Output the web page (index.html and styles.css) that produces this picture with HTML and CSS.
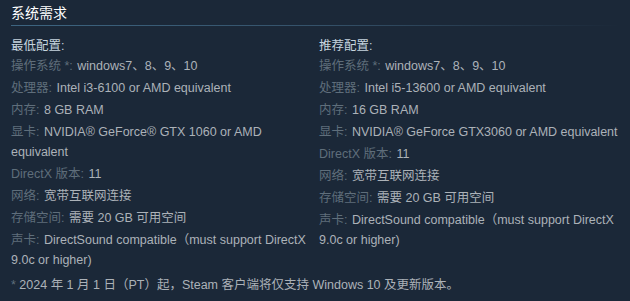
FILE: index.html
```html
<!DOCTYPE html>
<html lang="zh-CN">
<head>
<meta charset="utf-8">
<link rel="stylesheet" href="styles.css">
</head>
<body>
<div class="sysreq">
  <h2 class="title">系统需求</h2>
  <div class="cols">
    <div class="col">
      <div class="coltitle">最低配置:</div>
      <ul class="list">
        <li><span class="lbl">操作系统 *:</span> windows7、8、9、10</li>
        <li><span class="lbl">处理器:</span> Intel i3-6100 or AMD equivalent</li>
        <li><span class="lbl">内存:</span> 8 GB RAM</li>
        <li><span class="lbl">显卡:</span> NVIDIA® GeForce® GTX 1060 or AMD equivalent</li>
        <li><span class="lbl">DirectX 版本:</span> 11</li>
        <li><span class="lbl">网络:</span> 宽带互联网连接</li>
        <li><span class="lbl">存储空间:</span> 需要 20 GB 可用空间</li>
        <li><span class="lbl">声卡:</span> DirectSound compatible（must support DirectX 9.0c or higher)</li>
      </ul>
    </div>
    <div class="col">
      <div class="coltitle">推荐配置:</div>
      <ul class="list">
        <li><span class="lbl">操作系统 *:</span> windows7、8、9、10</li>
        <li><span class="lbl">处理器:</span> Intel i5-13600 or AMD equivalent</li>
        <li><span class="lbl">内存:</span> 16 GB RAM</li>
        <li><span class="lbl">显卡:</span> NVIDIA® GeForce GTX3060 or AMD equivalent</li>
        <li><span class="lbl">DirectX 版本:</span> 11</li>
        <li><span class="lbl">网络:</span> 宽带互联网连接</li>
        <li><span class="lbl">存储空间:</span> 需要 20 GB 可用空间</li>
        <li><span class="lbl">声卡:</span> DirectSound compatible（must support DirectX 9.0c or higher)</li>
      </ul>
    </div>
  </div>
  <p class="note"><span class="star">*</span> 2024 年 1 月 1 日（PT）起，Steam 客户端将仅支持 Windows 10 及更新版本。</p>
</div>
</body>
</html>
```

FILE: styles.css
```css
html, body {
  margin: 0;
  padding: 0;
  background: #1b2838;
}
body {
  font-family: "Liberation Sans", Arial, "Noto Sans CJK SC", sans-serif;
  font-size: 12.5px;
  color: #acb2b8;
}
.sysreq {
  padding: 0 11px;
}
.title {
  margin: 0;
  padding-top: 4px;
  height: 21px;
  font-size: 14px;
  font-weight: normal;
  line-height: 18px;
  color: #ffffff;
  border-bottom: 1px solid transparent;
  border-image: linear-gradient(to right, #3d6581 0%, #35526a 50%, rgba(40,60,80,0) 100%) 1;
}
.cols {
  display: grid;
  grid-template-columns: 300px 300px;
  column-gap: 8px;
  margin-top: 10px;
}
.coltitle {
  line-height: 20px;
  color: #c6d4df;
}
.list {
  list-style: none;
  margin: 0;
  padding: 0;
}
.list li {
  line-height: 20px;
  margin-bottom: 2px;
}
.lbl {
  color: #5f6e7b;
  margin-right: 1px;
}
.note {
  margin: 3px 0 0;
  line-height: 20px;
  color: #acb2b8;
}
.star {
  color: #5f6e7b;
}
```
